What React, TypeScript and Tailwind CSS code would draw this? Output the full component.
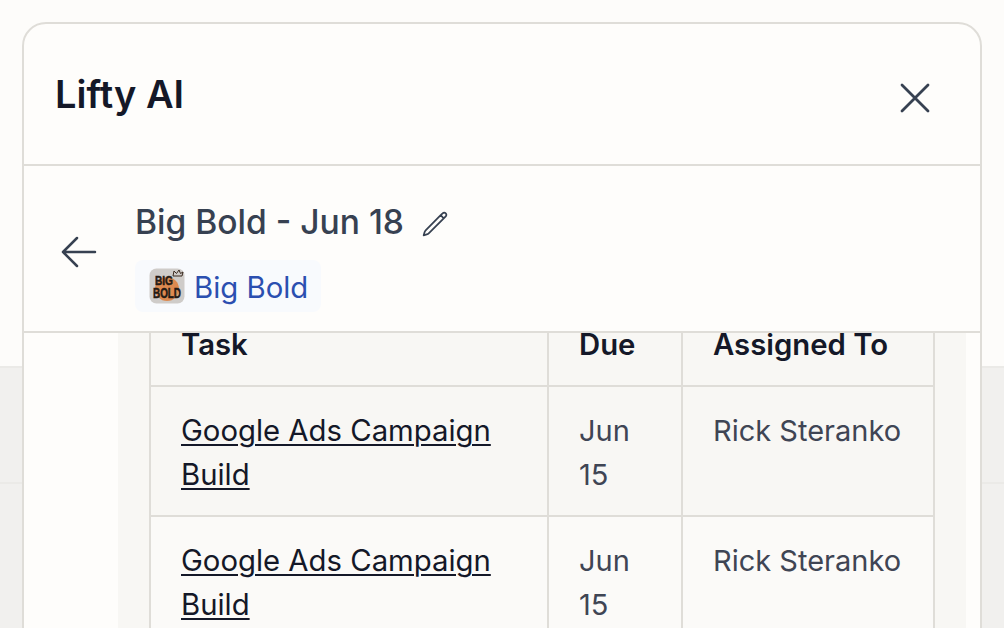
const rows = [
  { task: "Google Ads Campaign Build", due: "Jun 15", who: "Rick Steranko", bg: "bg-[#f8f7f4]" },
  { task: "Google Ads Campaign Build", due: "Jun 15", who: "Rick Steranko", bg: "bg-[#fbfaf8]" },
];

const BigBoldLogo = () => (
  <svg width="36" height="36" viewBox="0 0 36 36" className="mt-[1px]">
    <rect x="0.5" y="0.5" width="35" height="35" rx="7" fill="#cfccc9" />
    <circle cx="18" cy="21" r="12" fill="#dd8a50" />
    <path d="M24 8l1-5 2.500 2.500L30 2l1.500 3.500L34 4l-1 4z" fill="none" stroke="#3a2a20" strokeWidth="1" />
    <text x="6" y="17" textLength="18" lengthAdjust="spacingAndGlyphs" fontFamily="'Liberation Sans',sans-serif" fontWeight="700" fontSize="13" stroke="#241a14" strokeWidth="0.5" fill="#241a14">BIG</text>
    <text x="4" y="30" textLength="28" lengthAdjust="spacingAndGlyphs" fontFamily="'Liberation Sans',sans-serif" fontWeight="700" fontSize="14" stroke="#241a14" strokeWidth="0.5" fill="#241a14">BOLD</text>
  </svg>
);

export default function App() {
  return (
    <div className="relative w-[1004px] h-[628px] overflow-hidden flex flex-col bg-[#fdfcfa] font-['Inter',sans-serif]">
      <div className="h-[368px] shrink-0 border-b-2 border-[#ebeae7]" />
      <div className="h-[116px] shrink-0 bg-[#f1f0ee] border-b-2 border-[#ebeae7]" />
      <div className="flex-1 bg-[#f1f0ee]" />

      <div className="absolute left-[22px] top-[22px] w-[960px] h-[640px] flex flex-col overflow-hidden rounded-t-[24px] border-2 border-[#dfddd8] bg-[#fefdfb]">
        <div className="h-[142px] shrink-0 flex items-center justify-between pl-[31px] pr-[41px] border-b-2 border-[#dfddd8]">
          <h1 className="text-[38px] leading-[44px] font-semibold text-[#141828]">Lifty AI</h1>
          <button className="text-[#374151] mt-[8px]">
            <svg width="48" height="48" viewBox="0 0 24 24" fill="none" stroke="currentColor" strokeWidth="1.4" strokeLinecap="round" strokeLinejoin="round">
              <path d="M5.500 18.500 18.500 5.500M5.500 5.500l13 13" />
            </svg>
          </button>
        </div>

        <div className="h-[167px] shrink-0 flex items-center border-b-2 border-[#dfddd8] pl-[32px] relative z-10 bg-[#fefdfb]">
          <svg width="48" height="48" viewBox="0 0 24 24" fill="none" stroke="currentColor" strokeWidth="1.25" strokeLinecap="round" strokeLinejoin="round" className="text-[#374151] shrink-0 mt-[7px]">
            <path d="M10.500 19 3.500 12m0 0 7-7M3.500 12h16" />
          </svg>
          <div className="ml-[31px] flex flex-col items-start pt-[14px]">
            <div className="flex items-center gap-[17px]">
              <span className="text-[33.600px] leading-[44px] text-[#374151] font-medium">Big Bold - Jun 18</span>
              <svg width="28" height="28" viewBox="0 0 24 24" fill="none" stroke="currentColor" strokeWidth="1.5" strokeLinecap="round" strokeLinejoin="round" className="text-[#374151] mt-[5px]">
                <path d="m16.862 4.487 1.687-1.688a1.875 1.875 0 1 1 2.652 2.652L6.832 19.82a4.5 4.5 0 0 1-1.897 1.13l-2.685.8.8-2.685a4.5 4.5 0 0 1 1.13-1.897L16.863 4.487Zm0 0L19.5 7.125" />
              </svg>
            </div>
            <div className="mt-[16px] h-[52px] flex items-center gap-[9px] pl-[14px] pr-[13px] rounded-[8px] bg-[#f8fafd]">
              <BigBoldLogo />
              <span className="text-[29.300px] leading-[44px] text-[#2b4fb0] pt-[4px]">Big Bold</span>
            </div>
          </div>
        </div>

        <div className="flex-1 overflow-hidden pl-[94px] pr-[14px]">
          <div className="bg-[#f8f7f4] -mt-[32px] pl-[31px] pr-[33px] w-[848px]">
            <table className="table-fixed border-collapse w-[784px] text-[29.300px] leading-[44px]">
              <colgroup>
                <col className="w-[398px]" />
                <col className="w-[134px]" />
                <col className="w-[252px]" />
              </colgroup>
              <thead>
                <tr>
                  <th className="border-2 border-[#dfddd8] px-[30px] pt-[20px] pb-[18px] text-left font-semibold text-[#141828]">Task</th>
                  <th className="border-2 border-[#dfddd8] px-[30px] pt-[20px] pb-[18px] text-left font-semibold text-[#141828]">Due</th>
                  <th className="border-2 border-[#dfddd8] pl-[30px] pr-0 pt-[20px] pb-[18px] text-left font-semibold text-[#141828] whitespace-nowrap">Assigned To</th>
                </tr>
              </thead>
              <tbody>
                {rows.map((r, i) => (
                  <tr key={i} className={r.bg}>
                    <td className="border-2 border-[#dfddd8] px-[30px] pt-[22px] pb-[18px] align-top">
                      <a className="text-[#141828] underline decoration-2 underline-offset-[3px]">{r.task}</a>
                    </td>
                    <td className="border-2 border-[#dfddd8] px-[30px] pt-[22px] pb-[18px] align-top text-[29px] text-[#3f4554]">{r.due}</td>
                    <td className="border-2 border-[#dfddd8] pl-[30px] pr-0 pt-[22px] pb-[18px] align-top text-[29px] text-[#3f4554] whitespace-nowrap">{r.who}</td>
                  </tr>
                ))}
              </tbody>
            </table>
          </div>
        </div>
      </div>
    </div>
  );
}
